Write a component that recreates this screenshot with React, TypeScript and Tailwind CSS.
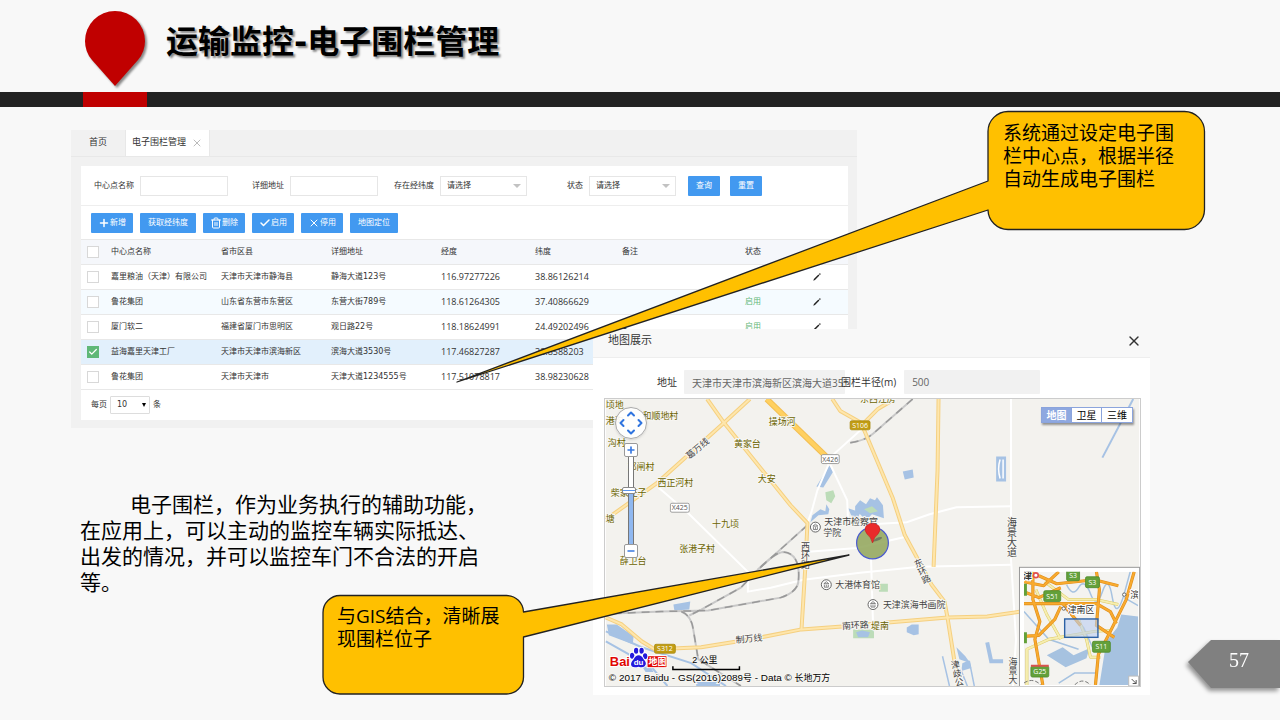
import { useState } from 'react';
import { Check, ChevronDown, ChevronLeft, ChevronRight, ChevronUp, Minus, Plus, Trash2, X } from 'lucide-react';

type Fence = {
  name: string;
  region: string;
  address: string;
  lng: string;
  lat: string;
  remark: string;
  status: string;
  checked?: boolean;
};

const fences: Fence[] = [
  { name: '嘉里粮油（天津）有限公司', region: '天津市天津市静海县', address: '静海大道123号', lng: '116.97277226', lat: '38.86126214', remark: '', status: '' },
  { name: '鲁花集团', region: '山东省东营市东营区', address: '东营大街789号', lng: '118.61264305', lat: '37.40866629', remark: '', status: '启用' },
  { name: '厦门软二', region: '福建省厦门市思明区', address: '观日路22号', lng: '118.18624991', lat: '24.49202496', remark: '1', status: '启用' },
  { name: '益海嘉里天津工厂', region: '天津市天津市滨海新区', address: '滨海大道3530号', lng: '117.46827287', lat: '38.8588203', remark: '', status: '启用', checked: true },
  { name: '鲁花集团', region: '天津市天津市', address: '天津大道1234555号', lng: '117.51078817', lat: '38.98230628', remark: '', status: '启用' },
];

const columns = ['中心点名称', '省市区县', '详细地址', '经度', '纬度', '备注', '状态', ''];

const villages: [string, number, number][] = [
  ['顷地', 604, 407],
  ['港沟', 604, 423],
  ['和顺地村', 641, 418],
  ['沟村', 606, 445],
  ['邓闸村', 626, 470],
  ['柴家庄子', 609, 496],
  ['塘', 604, 522],
  ['薛卫台', 618, 564],
  ['操场河', 768, 424],
  ['黄家台', 733, 446],
  ['大安', 757, 482],
  ['西正河村', 656, 486],
  ['十九顷', 711, 527],
  ['张港子村', 678, 552],
  ['堤南', 871, 630],
  ['东西江房', 860, 401],
];

const yellowRoads = [
  'M706 398 L723 422 L790 505 L807 523 L805 565 L801 630',
  'M749 398 L723 422 L655 483 L610 515 L604 519',
  'M832 398 L840 410 L861 422 L893 498 L905 535 L932 585 L945 602 L948 618 L955 662 L960 687',
  'M939 398 L938 470 L934 567',
  'M861 425 L878 408 L893 399',
  'M604 618 L620 625 L640 642 L653 650 L700 648 L750 640 L801 630 L842 627 L888 623 L948 618 L988 617 L1022 612',
];

const whiteRoads = [
  'M862 428 L832 455 L817 490 L811 512 L807 523',
  'M830 464 L847 500 L848 524',
  'M1012 398 V560 L1017 640 L1014 687',
  'M855 525 L907 522 L930 514 L957 507 L1012 506',
  'M657 487 L687 513 L747 572 L747 592 L770 588 L803 580 L860 573 L920 567 L1012 565',
  'M805 552 L857 548 L905 537',
  'M871 558 L873 624',
];

const railways = [
  'M612 614 L660 612 L707 611 L780 598 Q798 592 798 580 Q800 553 782 552 Q774 553 757 570 L740 588 L700 610 L688 616',
  'M807 525 L757 570',
  'M680 612 Q690 616 692 630 L697 660 L740 687',
  'M913 398 L873 433 Q865 440 850 442',
];

const miniYellow = 'M1028 686 V650 L1050 640 L1096 632 L1112 631 M1037 590 L1048 615 L1062 640 M1046 582 L1070 600 L1098 600 L1120 605 M1080 620 L1088 640 L1092 658 L1102 658';

const miniOrange = 'M1034 572 V600 L1041 622 L1036 640 L1044 686 M1025 604 H1098 L1112 612 L1118 624 M1025 637 L1040 636 L1056 620 L1062 607 M1098 572 L1101 590 L1098 626 L1116 638 M1136 572 L1128 600 L1110 636 L1100 655 L1097 686 M1025 582 L1045 586 L1060 572 M1025 592 L1040 598 L1062 588 M1040 576 L1058 584 L1096 580 L1120 586 M1064 604 L1082 626';

const Button = ({ width, children }: { width: string; children: React.ReactNode }) => (
  <button type="button" className={`flex h-5 items-center justify-center rounded-[1px] bg-[#4299f0] text-white ${width}`}>
    {children}
  </button>
);

const TextField = ({ id, label }: { id: string; label: string }) => (
  <div className="flex items-center gap-[6px]">
    <label htmlFor={id} className="w-[53px] text-right">{label}</label>
    <input id={id} type="text" className="h-5 w-[88px] border border-[#e6e6e6] bg-white px-2 outline-none" />
  </div>
);

const SelectField = ({ id, label }: { id: string; label: string }) => (
  <div className="flex items-center gap-[6px]">
    <label htmlFor={id} className="w-[53px] text-right">{label}</label>
    <div className="relative">
      <select id={id} className="h-5 w-[87px] appearance-none border border-[#e6e6e6] bg-white pl-[6px] outline-none">
        <option>请选择</option>
      </select>
      <span className="pointer-events-none absolute top-2 right-[6px] border-x-4 border-t-4 border-x-transparent border-t-[#c2c2c2]" />
    </div>
  </div>
);

const Pencil = () => (
  <svg viewBox="0 0 8 8" className="h-2 w-2">
    <path d="M0.3 7.7 L0.9 5.9 L5.4 1.6 L6.4 2.6 L2 7 Z M5.9 1.1 L6.5 0.5 Q6.9 0.2 7.4 0.6 Q7.8 1.1 7.5 1.5 L6.9 2.1 Z" fill="#222" />
  </svg>
);

const FenceList = () => (
  <section className="w-[786px] bg-[#f1f1f1] pb-2 font-['DejaVu_Sans','Noto_Sans_CJK_SC',sans-serif] text-[8px] text-[#333]">
    <nav className="flex h-[27px] border-b border-[#e8e8e8] text-[9px]">
      <a href="#home" className="flex w-[55px] items-center justify-center border-r border-[#e8e8e8]">首页</a>
      <div className="flex w-[84px] items-center justify-center gap-[5px] border-r border-[#e8e8e8] bg-white">
        <a href="#fence">电子围栏管理</a>
        <button type="button" aria-label="关闭"><X className="h-3 w-3 text-[#bbb]" strokeWidth={2} /></button>
      </div>
    </nav>
    <div className="mt-[9px] mr-[9px] ml-[10px] bg-white">
      <form className="flex h-10 items-center gap-[3px] border-b border-[#eee]">
        <TextField id="center" label="中心点名称" />
        <TextField id="address" label="详细地址" />
        <SelectField id="hasPoint" label="存在经纬度" />
        <SelectField id="status" label="状态" />
        <div className="ml-[9px] flex gap-[10px]">
          <Button width="w-8">查询</Button>
          <Button width="w-8">重置</Button>
        </div>
      </form>
      <div className="flex h-[33px] items-center gap-[7px] pl-[10px]">
        <Button width="w-[42px]"><Plus className="h-3 w-3" strokeWidth={3} />新增</Button>
        <Button width="w-14">获取经纬度</Button>
        <Button width="w-[42px]"><Trash2 className="h-3 w-3" />删除</Button>
        <Button width="w-[42px]"><Check className="h-3 w-3" strokeWidth={3} />启用</Button>
        <Button width="w-[42px]"><X className="h-3 w-3" strokeWidth={2} />停用</Button>
        <Button width="w-12">地图定位</Button>
      </div>
      <table className="w-full table-fixed border-collapse text-left">
        <colgroup>
          <col className="w-[26px]" />
          <col className="w-[110px]" />
          <col className="w-[110px]" />
          <col className="w-[110px]" />
          <col className="w-[94px]" />
          <col className="w-[87px]" />
          <col className="w-[123px]" />
          <col className="w-[68px]" />
          <col />
        </colgroup>
        <thead>
          <tr className="h-[25px] border-y border-[#e8e8e8] bg-[#f5f7fb]">
            <th className="pl-[6px]"><input type="checkbox" aria-label="全选" className="block h-3 w-3 appearance-none border border-[#d8d8d8] bg-white" /></th>
            {columns.map((c, i) => <th key={i} className="px-1 font-normal">{c}</th>)}
          </tr>
        </thead>
        <tbody>
          {fences.map((f, i) => (
            <tr key={i} className={`h-[25px] border-b border-[#e8e8e8] ${f.checked ? 'bg-[#e2f0fc]' : i === 1 ? 'bg-[#f5fbff]' : 'bg-white'}`}>
              <td className="pl-[6px]">
                <div className="relative h-3 w-3">
                  <input
                    type="checkbox"
                    aria-label={f.name}
                    defaultChecked={f.checked}
                    className="peer block h-3 w-3 appearance-none border border-[#d8d8d8] bg-white checked:border-[#5fb878] checked:bg-[#5fb878]"
                  />
                  <Check className="pointer-events-none absolute top-[1px] left-[1px] hidden h-[10px] w-[10px] text-white peer-checked:block" strokeWidth={3} />
                </div>
              </td>
              <td className="px-1 whitespace-nowrap">{f.name}</td>
              <td className="px-1">{f.region}</td>
              <td className="px-1">{f.address}</td>
              <td className="px-1 font-['Open_Sans',sans-serif] text-[9px]">{f.lng}</td>
              <td className="px-1 font-['Open_Sans',sans-serif] text-[9px]">{f.lat}</td>
              <td className="px-1">{f.remark}</td>
              <td className="px-1 text-[#5fb878]">{f.status}</td>
              <td className="px-1"><button type="button" aria-label="编辑" className="block"><Pencil /></button></td>
            </tr>
          ))}
        </tbody>
      </table>
      <div className="flex h-[30px] items-center gap-[3px] pl-[10px]">
        <label htmlFor="pageSize">每页</label>
        <div className="relative">
          <select id="pageSize" className="h-[18px] w-10 appearance-none rounded-[1px] border border-[#ddd] bg-white pl-[6px] text-[8px]">
            <option>10</option>
          </select>
          <span className="pointer-events-none absolute top-[7px] right-1 border-x-2 border-t-4 border-x-transparent border-t-black" />
        </div>
        <span>条</span>
      </div>
    </div>
  </section>
);

const Shield = ({ x, y, w, text, kind }: { x: number; y: number; w: number; text: string; kind: 'gold' | 'white' | 'green' }) => (
  <g>
    <rect
      x={x} y={y} width={w} height={kind === 'green' ? 11 : 9} rx="1.5"
      fill={kind === 'gold' ? '#c29d12' : kind === 'green' ? '#63a03a' : '#fff'}
      stroke={kind === 'white' ? '#888' : kind === 'green' ? '#4c8a2c' : '#a98a12'}
      strokeWidth="0.8"
    />
    <text
      x={x + w / 2} y={y + (kind === 'green' ? 8 : 7)} textAnchor="middle"
      className="font-['Open_Sans',sans-serif] text-[7px]"
      fill={kind === 'white' ? '#555' : '#fff'}
    >
      {text}
    </text>
  </g>
);

const Poi = ({ x, y }: { x: number; y: number }) => (
  <g fill="none" stroke="#666">
    <circle cx={x} cy={y} r="5" fill="#fff" />
    <path d={`M${x - 2.5} ${y - 1} L${x} ${y - 3} L${x + 2.5} ${y - 1} Z M${x - 2} ${y} V${y + 2.5} H${x + 2} V${y} M${x} ${y} V${y + 2}`} strokeWidth="0.8" />
  </g>
);

const MiniMap = () => (
  <g>
    <rect x="1020.5" y="567.5" width="121" height="120" fill="#fff" stroke="#999" />
    <svg x="1025" y="572" width="115" height="114" viewBox="1025 572 115 114">
      <rect x="1025" y="572" width="115" height="114" fill="#f4f3f0" />
      <path d="M1140 617 L1123 615 L1119 628 L1108 642 L1101 686 H1140 Z M1048 656 L1064 648 L1075 656 L1091 649 L1088 659 L1067 668 Z" fill="#a6c2e0" />
      <g fill="none" stroke="#a6c2e0" strokeWidth="1.5">
        <path d="M1068 585 Q1074 598 1080 588 T1092 594 T1104 592 T1114 598 T1126 594 L1132 572" />
        <path d="M1025 612 L1050 640 L1080 650 M1065 608 L1085 628 L1094 648 M1060 684 L1076 674 L1098 674 M1126 598 L1140 606" />
      </g>
      <g fill="none" strokeLinejoin="round">
        <path d={miniYellow} stroke="#ddc964" strokeWidth="3" />
        <path d={miniYellow} stroke="#f6eeb0" strokeWidth="2" />
        <path d={miniOrange} stroke="#dd8d1b" strokeWidth="3.2" />
        <path d={miniOrange} stroke="#f9aa2e" strokeWidth="2" />
      </g>
      <path d="M1025 684 Q1034 678 1042 686 M1076 686 Q1084 678 1092 686" fill="none" stroke="#777" strokeDasharray="4 2" />
      <g className="font-['Noto_Sans_CJK_SC',sans-serif] text-[9px]" fill="#333" stroke="#fff" strokeWidth="2" paintOrder="stroke">
        <text x="1024" y="579" className="font-bold">津</text>
        <text x="1069" y="613">津南区</text>
        <text x="1132" y="598">滨</text>
      </g>
      <circle cx="1065" cy="609" r="1.7" fill="#fff" stroke="#666" />
      <circle cx="1126" cy="595" r="1.7" fill="#fff" stroke="#666" />
      <circle cx="1037" cy="575.5" r="2.4" fill="#fff" stroke="#e0504f" strokeWidth="1.6" />
      <Shield x={1068} y={570} w={13} text="S3" kind="green" />
      <Shield x={1087} y={577} w={14} text="S3" kind="green" />
      <Shield x={1045} y={591} w={17} text="S51" kind="green" />
      <Shield x={1094} y={642} w={18} text="S11" kind="green" />
      <Shield x={1032} y={667} w={18} text="G25" kind="green" />
      <path d="M1032 666.5 H1050" stroke="#d9534f" strokeWidth="2" />
      <path d="M1025 584 h3 v12 h-3 z M1025 633 h3 v11 h-3 z" fill="#63a03a" />
      <rect x="1066" y="619.5" width="33.5" height="18.5" fill="#b9cdf0" fillOpacity="0.6" stroke="#2c61a5" strokeWidth="1.4" />
    </svg>
    <path d="M1130.5 677 h10 v10 h-10 z" fill="#fff" stroke="#bbb" />
    <path d="M1133.5 680 L1138 684.5 M1138 681 V684.5 H1134.5" fill="none" stroke="#555" />
  </g>
);

const BaiduLogo = () => (
  <g stroke="#fff" strokeWidth="2" paintOrder="stroke">
    <text x="608" y="667" fill="#e10602" className="font-['Liberation_Sans',sans-serif] text-[13px] font-bold">Bai</text>
    <rect x="646" y="657" width="19" height="11" fill="#e10602" />
    <g fill="#2319dc">
      <ellipse cx="630.5" cy="656.5" rx="2.2" ry="3" />
      <ellipse cx="634.5" cy="651.5" rx="2.2" ry="3" />
      <ellipse cx="640" cy="651.5" rx="2.2" ry="3" />
      <ellipse cx="643.5" cy="657" rx="2.2" ry="3" />
      <path d="M637 656 Q640 656 642 660 Q646 664 643 667 Q641 669 637 667.5 Q632 669 630 667 Q628 664 632 660 Q634 656 637 656 Z" />
    </g>
    <g fill="#fff" stroke="none">
      <text x="632" y="666" className="font-['Liberation_Sans',sans-serif] text-[8px] font-bold">du</text>
      <text x="647" y="666" className="font-['Noto_Sans_CJK_SC',sans-serif] text-[9px] font-bold">地图</text>
    </g>
  </g>
);

const MapDrawing = () => (
  <svg viewBox="604 398 537 289" className="block h-full w-full font-['Noto_Sans_CJK_SC',sans-serif] text-[9px]">
    <rect x="604" y="398" width="537" height="289" fill="#f3f2ee" />
    <g fill="#a6c2e4">
      <path d="M829 465 L833 471 L823 487 L816 486 Z" />
      <path d="M855 506 L860 500 L866 504 L870 498 L875 500 L877 497 L883 505 L884 518 L872 514 L866 520 L860 514 L855 513 Z" />
      <path d="M812 515 L820 509 L825 511 L826 504 L829 509 L828 514 L818 515 L810 522 Z" />
      <path d="M848 508 L860 512 L858 518 L851 515 Z" />
      <path d="M903 471 L913 469 L914 477 L905 479 Z M997 456 h10 v25 h-10 z M672 605 L689 602 L688 610 L673 611 Z" />
      <path d="M605 625 H615 L632 637 L631 645 L607 636 Z M641 668 L648 666 L652 673 L644 673 Z" />
      <path d="M907 628 L912 625 L919 625 V635 L914 636 L907 633 Z M957 648 L966 657 L971 664 L960 660 Z M695 683 h24 v4 h-24 z" />
      <path d="M963 664 L970 661 L972 669 L962 672 Z" />
    </g>
    <path d="M1001 459 Q998 468 1001 478 M1004 459 V478" fill="none" stroke="#fff" strokeWidth="1.5" />
    <g fill="none" stroke="#a6c2e4">
      <path d="M1135 398 L1104 457" strokeWidth="2" />
      <path d="M604 632 L640 648 L690 664 L725 687 M604 642 L650 668 L666 687" strokeWidth="2" />
      <path d="M943 657 L950 687 M970 662 L975 687 M962 672 L968 687" strokeWidth="1.5" />
      <path d="M988 643 L992 662 L1004 662" strokeWidth="4" />
    </g>
    <path d="M825 492 L833 490 L835 496 L831 503 L826 500 Z M864 509 L872 506 L878 511 L870 513 Z M879 584 h9 v8 h-9 z M853 630 h21 v9 h-21 z" fill="#bcdcb8" />
    <path d="M856 633 l6 -2 l8 2 l-2 5 l-10 0 z" fill="#a6c2e4" />
    <g fill="none" stroke="#fff" strokeWidth="2">
      {whiteRoads.map((d) => <path key={d} d={d} />)}
    </g>
    <g fill="none" strokeLinejoin="round">
      {railways.map((d) => <path key={d} d={d} stroke="#c8c8c8" strokeWidth="2" />)}
      {railways.map((d) => <path key={d} d={d} stroke="#999" strokeWidth="1.5" strokeDasharray="8 6" />)}
      {yellowRoads.map((d) => <path key={d} d={d} stroke="#f5d080" strokeWidth="4" />)}
      {yellowRoads.map((d) => <path key={d} d={d} stroke="#fee6ac" strokeWidth="2" />)}
      <path d="M766 398 L827 457" stroke="#f3bf52" strokeWidth="6" />
      <path d="M766 398 L827 457" stroke="#ffd060" strokeWidth="4" />
    </g>
    <g fill="#6b6400" stroke="#f7f6f2" strokeWidth="2" paintOrder="stroke">
      {villages.map(([name, x, y]) => <text key={name} x={x} y={y}>{name}</text>)}
    </g>
    <g fill="#444" stroke="#f7f6f2" strokeWidth="2" paintOrder="stroke">
      <text x="824" y="525">天津市检察官</text>
      <text x="823" y="536">学院</text>
      <text x="835" y="588">大港体育馆</text>
      <text x="883" y="608">天津滨海书画院</text>
      <text x="842" y="630" transform="rotate(-4 842 630)">南环路</text>
      <text x="735" y="644" transform="rotate(-6 735 644)">制万线</text>
      <text x="688" y="459" transform="rotate(-40 688 459)">葛万线</text>
      <g className="[writing-mode:vertical-rl]">
        <text x="805" y="542">西环路</text>
        <text x="917" y="559" transform="rotate(-25 917 559)">东环路</text>
        <text x="1013" y="517" className="text-[10px]">海景大道</text>
        <text x="1014" y="658">海景大</text>
        <text x="955" y="661" transform="rotate(-12 955 661)">津歧公</text>
      </g>
    </g>
    <Poi x={815} y={527} />
    <Poi x={826} y={585} />
    <Poi x={873} y={605} />
    <Shield x={850} y={420} w={20} text="S106" kind="gold" />
    <Shield x={653} y={645} w={21} text="S312" kind="gold" />
    <Shield x={821} y={454} w={18} text="X426" kind="white" />
    <Shield x={669} y={503} w={19} text="X425" kind="white" />
    <circle cx="872.5" cy="543" r="16" fill="#8fa558" fillOpacity="0.85" stroke="#4a5ad0" strokeWidth="1.2" />
    <path d="M872 542 Q877 536 882 537 Q883 540 872 542 Z" fill="#555" fillOpacity="0.6" />
    <path d="M872.5 543 Q871 537 867 534 Q863.5 530 866 526 Q868.5 523 872.5 523 Q876.5 523 879 526 Q881.5 530 878 534 Q874 537 872.5 543 Z" fill="#ea2b2b" stroke="#c01d1d" strokeWidth="0.6" />
    <BaiduLogo />
    <text x="691" y="664" fill="#000" className="font-['Liberation_Sans','Noto_Sans_CJK_SC',sans-serif] text-[9px]">2 公里</text>
    <path d="M671.5 667 V670.5 H738.5 V667" fill="none" stroke="#000" strokeWidth="1.5" />
    <text x="607" y="682" fill="#000" stroke="#f7f6f2" strokeWidth="2" paintOrder="stroke" className="font-['Liberation_Sans','Noto_Sans_CJK_SC',sans-serif] text-[10px]">
      © 2017 Baidu - GS(2016)2089<tspan className="text-[9px]">号</tspan> - Data © <tspan className="text-[9px]">长地万方</tspan>
    </text>
    <MiniMap />
  </svg>
);

const MapControls = () => {
  const [zoom, setZoom] = useState(62);
  const step = 'flex h-[14px] w-[14px] items-center justify-center rounded-[2px] border border-[#999] bg-white text-[#3a7ae0]';

  return (
    <div className="absolute top-2 left-[10px] flex w-8 flex-col items-center">
      <div className="grid h-8 w-8 grid-cols-3 grid-rows-3 place-items-center rounded-full border border-[#aaa] bg-white/90 p-px text-[#2f74df] shadow">
        <button type="button" aria-label="上移" className="col-start-2 row-start-1"><ChevronUp className="h-3 w-3" strokeWidth={4} /></button>
        <button type="button" aria-label="左移" className="col-start-1 row-start-2"><ChevronLeft className="h-3 w-3" strokeWidth={4} /></button>
        <button type="button" aria-label="右移" className="col-start-3 row-start-2"><ChevronRight className="h-3 w-3" strokeWidth={4} /></button>
        <button type="button" aria-label="下移" className="col-start-2 row-start-3"><ChevronDown className="h-3 w-3" strokeWidth={4} /></button>
      </div>
      <button type="button" aria-label="放大" className={`mt-1 ${step}`} onClick={() => setZoom(zoom + 5)}><Plus className="h-[10px] w-[10px]" strokeWidth={4} /></button>
      <input
        type="range"
        aria-label="缩放级别"
        value={zoom}
        onChange={(e) => setZoom(Number(e.target.value))}
        className="h-[87px] w-[6px] appearance-none bg-[linear-gradient(to_right,#777_1px,transparent_1px,transparent_5px,#777_5px),linear-gradient(to_bottom,#fff_40%,#8fb8f0_40%)] [direction:rtl] [writing-mode:vertical-lr] [&::-webkit-slider-thumb]:-ml-1 [&::-webkit-slider-thumb]:h-[7px] [&::-webkit-slider-thumb]:w-[14px] [&::-webkit-slider-thumb]:appearance-none [&::-webkit-slider-thumb]:rounded-[2px] [&::-webkit-slider-thumb]:border [&::-webkit-slider-thumb]:border-[#888] [&::-webkit-slider-thumb]:bg-[linear-gradient(#fff_2px,#5a96ee_2px,#5a96ee_3px,#fff_3px)]"
      />
      <button type="button" aria-label="缩小" className={step} onClick={() => setZoom(zoom - 5)}><Minus className="h-[10px] w-[10px]" strokeWidth={4} /></button>
    </div>
  );
};

const MapDialog = () => (
  <section role="dialog" aria-label="地图展示" className="absolute top-[329px] left-[593px] w-[557px] bg-white pb-2 font-['Open_Sans','Noto_Sans_CJK_SC',sans-serif] text-[10px] text-[#333]">
    <header className="flex h-[29px] items-start justify-between border-b border-[#eee] bg-[#f8f8f8] pr-2 pl-[15px]">
      <h2 className="text-[11px] leading-[21px]">地图展示</h2>
      <button type="button" aria-label="关闭" className="mt-1"><X className="h-4 w-4" strokeWidth={2} /></button>
    </header>
    <form className="mt-3 flex h-6 items-center pl-16">
      <label htmlFor="mapAddress" className="mr-[7px]">地址</label>
      <input id="mapAddress" readOnly defaultValue="天津市天津市滨海新区滨海大道3530号" className="h-6 w-[161px] rounded-[1px] bg-[#f1f1f1] pl-2 text-[#666]" />
      <label htmlFor="radius" className="-ml-1 mr-2 whitespace-nowrap">围栏半径(m)</label>
      <input id="radius" readOnly defaultValue="500" className="h-6 w-[136px] rounded-[1px] bg-[#f1f1f1] px-2 text-[#666]" />
    </form>
    <div className="relative mt-1 mr-[9px] ml-[11px] h-[289px] border border-[#ccc]">
      <MapDrawing />
      <MapControls />
      <div className="absolute top-2 right-[7px] flex h-4 divide-x divide-[#8ba4dc] border border-[#8ba4dc] bg-white text-[10px] text-black shadow-[1px_2px_2px_rgba(0,0,0,0.4)]">
        <button type="button" className="w-[30px] bg-[#8ea8e0] leading-[14px] font-bold text-white">地图</button>
        <button type="button" className="w-[30px] leading-[14px]">卫星</button>
        <button type="button" className="w-[30px] leading-[14px]">三维</button>
      </div>
    </div>
  </section>
);

const App = () => {
  return (
    <main className="relative min-h-screen overflow-hidden bg-[#f8f8f8] font-['Open_Sans','Noto_Sans_CJK_SC',sans-serif] text-black">
      <header className="flex h-[92px] items-start pl-[83px]">
        <svg viewBox="0 0 64 81" className="mt-[11px] h-[81px] w-16 drop-shadow-[2px_2px_1px_rgba(0,0,0,0.45)]">
          <path d="M32 75 L9 49 Q2 41 2 30 A30 30 0 0 1 62 30 Q62 41 55 49 Z" fill="#c00000" />
        </svg>
        <h1 className="ml-[19px] font-['DejaVu_Sans','Noto_Sans_CJK_SC',sans-serif] text-[32px] leading-[84px] font-bold [text-shadow:2px_2px_2px_rgba(0,0,0,0.45)]">运输监控-电子围栏管理</h1>
      </header>
      <div className="h-[15px] bg-[#222] pl-[83px]">
        <div className="h-full w-16 bg-[#c00000]" />
      </div>

      <div className="mt-[23px] ml-[71px]">
        <FenceList />
        <p className="mt-[63px] ml-[9px] w-[414px] indent-[50px] text-[21px] leading-[26px]">
          电子围栏，作为业务执行的辅助功能，在应用上，可以主动的监控车辆实际抵达、出发的情况，并可以监控车门不合法的开启等。
        </p>
      </div>

      <MapDialog />

      <svg viewBox="0 0 1280 720" className="pointer-events-none absolute top-0 left-0 h-[720px] w-[1280px]">
        <g fill="#ffc000" stroke="#222" strokeWidth="1.3" strokeLinejoin="round">
          <path d="M1008 111.5 H1184.5 A20 20 0 0 1 1204.5 131.5 V209.5 A20 20 0 0 1 1184.5 229.5 H1008 A20 20 0 0 1 988 210 L457 382 L988 181 V131.5 A20 20 0 0 1 1008 111.5 Z" />
          <path d="M340 595.5 H506.500 A17 17 0 0 1 523.5 612 L849 555 L523.5 637 V677 A17 17 0 0 1 506.5 694 H340 A17 17 0 0 1 323 677 V612.5 A17 17 0 0 1 340 595.5 Z" />
        </g>
      </svg>
      <p className="absolute top-[122px] left-[1003px] w-[180px] text-[19px] leading-[23px]">系统通过设定电子围栏中心点，根据半径自动生成电子围栏</p>
      <p className="absolute top-[605px] left-[337px] w-[172px] text-[19px] leading-[23px]">与GIS结合，清晰展现围栏位子</p>

      <div className="absolute top-[640px] right-0 h-12 w-[92px] drop-shadow-[-2px_3px_2px_rgba(0,0,0,0.4)]">
        <div className="h-full bg-[#808080] pl-[41px] font-['Liberation_Serif',serif] text-[20px] leading-[40px] text-white [clip-path:polygon(0_46%,23px_0,100%_0,100%_100%,23px_100%)]">57</div>
      </div>
    </main>
  );
};

export default App;
